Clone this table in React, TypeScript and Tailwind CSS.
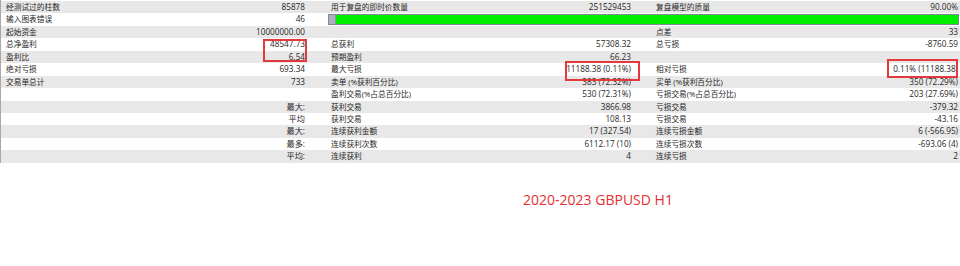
import React from "react";

type Row = {
  l1?: string;
  v1?: string;
  l2?: string;
  v2?: string;
  l3?: string;
  v3?: string;
  bar?: boolean;
};

const rows: Row[] = [
  { l1: "经测试过的柱数", v1: "85878", l2: "用于复盘的即时价数量", v2: "251529453", l3: "复盘模型的质量", v3: "90.00%" },
  { l1: "输入图表错误", v1: "46", bar: true },
  { l1: "起始资金", v1: "10000000.00", l3: "点差", v3: "33" },
  { l1: "总净盈利", v1: "48547.73", l2: "总获利", v2: "57308.32", l3: "总亏损", v3: "-8760.59" },
  { l1: "盈利比", v1: "6.54", l2: "预期盈利", v2: "66.23" },
  { l1: "绝对亏损", v1: "693.34", l2: "最大亏损", v2: "11188.38 (0.11%)", l3: "相对亏损", v3: "0.11% (11188.38)" },
  { l1: "交易单总计", v1: "733", l2: "卖单 (%获利百分比)", v2: "383 (72.32%)", l3: "买单 (%获利百分比)", v3: "350 (72.29%)" },
  { l2: "盈利交易(%占总百分比)", v2: "530 (72.31%)", l3: "亏损交易(%占总百分比)", v3: "203 (27.69%)" },
  { v1: "最大:", l2: "获利交易", v2: "3866.98", l3: "亏损交易", v3: "-379.32" },
  { v1: "平均", l2: "获利交易", v2: "108.13", l3: "亏损交易", v3: "-43.16" },
  { v1: "最大:", l2: "连续获利金额", v2: "17 (327.54)", l3: "连续亏损金额", v3: "6 (-566.95)" },
  { v1: "最多:", l2: "连续获利次数", v2: "6112.17 (10)", l3: "连续亏损次数", v3: "-693.06 (4)" },
  { v1: "平均:", l2: "连续获利", v2: "4", l3: "连续亏损", v3: "2" },
];

function Cell({ label, value, pad }: { label?: string; value?: string; pad: string }) {
  return (
    <div className={`flex justify-between whitespace-nowrap ${pad}`}>
      <span className="text-[7.7px]">{label ?? ""}</span>
      <span className="text-[8.2px]">{value ?? ""}</span>
    </div>
  );
}

export default function App() {
  return (
    <div
      className="relative w-[960px] h-[266px] bg-white overflow-hidden text-[#262626]"
      style={{ fontFamily: '"Open Sans", "Noto Sans CJK SC", sans-serif' }}
    >
      <div className="pt-[1px] border-l border-[#a8a8a8] leading-[12.45px]">
        {rows.map((r, i) => (
          <div
            key={i}
            className={`grid grid-cols-[320px_320px_320px] h-[12.45px] ${i % 2 === 0 ? "bg-[#e8e8e8]" : "bg-white"}`}
          >
            <Cell label={r.l1} value={r.v1} pad="pl-[5px] pr-[16px]" />
            {r.bar ? (
              <div className="col-span-2 flex items-stretch pl-[7px] pr-[2px] py-[0.5px]">
                <div className="flex flex-1 border border-[#7d8a96]">
                  <div className="w-[7px] bg-[#a9b1ba] border-r border-[#8a96a2]" />
                  <div className="flex-1 bg-[#00f000]" />
                </div>
              </div>
            ) : (
              <>
                <Cell label={r.l2} value={r.v2} pad="pl-[10px] pr-[10px]" />
                <Cell label={r.l3} value={r.v3} pad="pl-[15px] pr-[3px]" />
              </>
            )}
          </div>
        ))}
      </div>

      <div className="flex justify-center pt-[27px] pl-[236px]">
        <span className="text-[14px] leading-[20px] text-[#e62e2e]">2020-2023 GBPUSD H1</span>
      </div>

      <div className="absolute left-[263px] top-[39px] w-[44px] h-[23px] border-2 border-[#e4393c]" />
      <div className="absolute left-[565px] top-[61px] w-[75px] h-[20px] border-2 border-[#e4393c]" />
      <div className="absolute left-[887px] top-[59px] w-[71px] h-[19px] border-2 border-[#e4393c]" />
    </div>
  );
}
